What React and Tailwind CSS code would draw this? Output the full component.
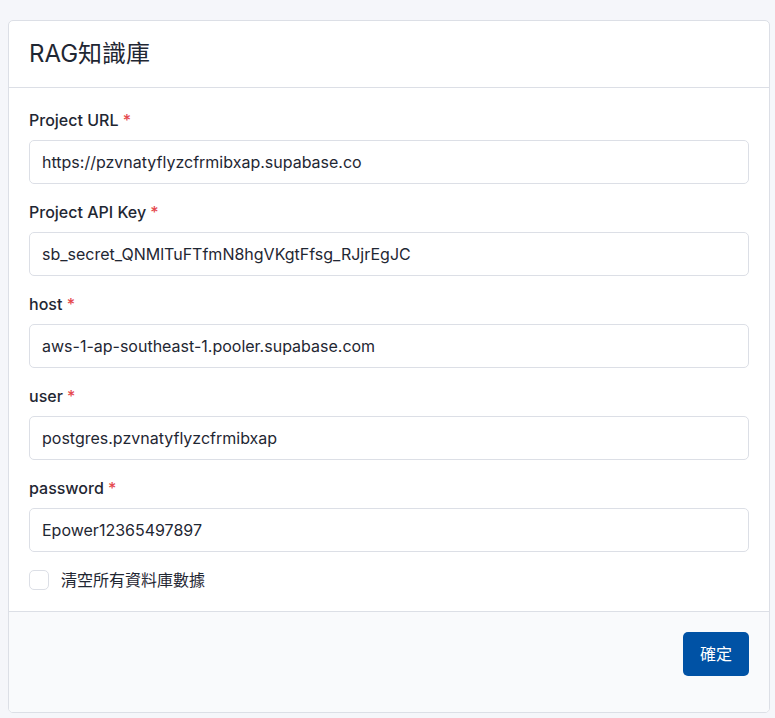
import React, { useState } from 'react'

const fields = [
  { label: 'Project URL', value: 'https://pzvnatyflyzcfrmibxap.supabase.co' },
  { label: 'Project API Key', value: 'sb_secret_QNMlTuFTfmN8hgVKgtFfsg_RJjrEgJC' },
  { label: 'host', value: 'aws-1-ap-southeast-1.pooler.supabase.com' },
  { label: 'user', value: 'postgres.pzvnatyflyzcfrmibxap' },
  { label: 'password', value: 'Epower12365497897' },
]

export default function App() {
  const [values, setValues] = useState(fields.map((f) => f.value))
  const [clearAll, setClearAll] = useState(false)

  return (
    <div
      className="min-h-[718px] bg-[#f5f6fa] pt-5 pl-2 pr-[5px] pb-[6px]"
      style={{ fontFamily: 'Inter, "Noto Sans CJK TC", sans-serif' }}
    >
      <div className="bg-white border border-[#dcdfe6] rounded-[5px] overflow-hidden">
        {/* Header */}
        <div className="h-[67px] flex items-center px-5 border-b border-[#dcdfe6]">
          <h1 className="text-[24px] text-[#1f2733] font-normal">RAG知識庫</h1>
        </div>

        {/* Body */}
        <div className="px-5 pt-5 pb-[19px]">
          <div className="flex flex-col gap-4">
            {fields.map((f, i) => (
              <div key={f.label} className="flex flex-col gap-2">
                <label className="text-base leading-6 font-medium text-[#1f2733]">
                  {f.label} <span className="text-[#e5484d]">*</span>
                </label>
                <input
                  value={values[i]}
                  onChange={(e) => {
                    const next = [...values]
                    next[i] = e.target.value
                    setValues(next)
                  }}
                  className="h-11 w-full rounded-[5px] border border-[#dcdfe6] px-3 text-base text-[#1f2733] outline-none"
                />
              </div>
            ))}
          </div>

          <label className="mt-4 flex items-center gap-3 cursor-pointer">
            <span className="w-5 h-5 rounded-[5px] border border-[#dcdfe6] bg-white flex items-center justify-center">
              <input
                type="checkbox"
                checked={clearAll}
                onChange={(e) => setClearAll(e.target.checked)}
                className="hidden"
              />
            </span>
            <span className="text-base text-[#1f2733]">清空所有資料庫數據</span>
          </label>
        </div>

        {/* Footer */}
        <div className="border-t border-[#dcdfe6] bg-[#f9fafc] px-5 pt-5 pb-9 flex justify-end">
          <button className="h-11 px-[17px] rounded-[5px] bg-[#0052a5] text-white text-base">
            確定
          </button>
        </div>
      </div>
    </div>
  )
}
